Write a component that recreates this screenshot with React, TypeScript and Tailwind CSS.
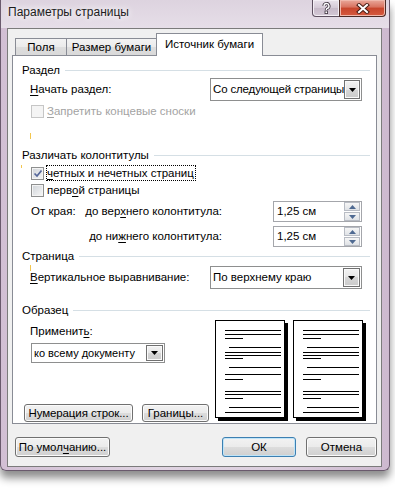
import React from "react";

const Tri = () => (
  <svg width="7" height="4" viewBox="0 0 7 4">
    <path d="M0 0h7L3.5 4z" fill="#000" />
  </svg>
);

const Combo = ({ text, className, textClass = "" }: { text: string; className: string; textClass?: string }) => (
  <div className={"flex items-stretch bg-white border border-[#8e8f8f] p-px " + className}>
    <div className={"flex-1 flex items-center pl-[1px] whitespace-nowrap " + textClass}>{text}</div>
    <div className="w-[17px] flex items-center justify-center border border-[#707070] bg-[linear-gradient(#f3f3f3,#e6e6e6_50%,#d6d6d6_50%,#cbcbcb)] shadow-[inset_0_0_0_1px_#fafafa]">
      <Tri />
    </div>
  </div>
);

const Check = ({ checked = false, disabled = false }: { checked?: boolean; disabled?: boolean }) => (
  <div
    className={
      "w-[13px] h-[13px] border flex items-center justify-center shrink-0 " +
      (disabled
        ? "border-[#c6c6c6] bg-[#f4f4f4]"
        : "border-[#8e8f8f] bg-[linear-gradient(135deg,#cfd3d8,#f7f7f7)] shadow-[inset_0_0_0_1px_#f4f4f4]")
    }
  >
    {checked && (
      <svg width="10" height="9" viewBox="0 0 10 9">
        <path d="M1.5 4.5L4 7L8.5 1.5" stroke="#55679a" strokeWidth="1.7" fill="none" />
      </svg>
    )}
  </div>
);

const SpinArrow = ({ up }: { up?: boolean }) => (
  <svg width="7" height="4" viewBox="0 0 7 4">
    <path d={up ? "M0 4h7L3.5 0z" : "M0 0h7L3.5 4z"} fill="#4f6a92" />
  </svg>
);

const Spin = ({ value }: { value: string }) => (
  <div className="w-[89px] h-[21px] border border-[#a4a6ab] bg-white flex items-center">
    <span className="flex-1 pl-[3px]">{value}</span>
    <div className="flex flex-col gap-px mr-px">
      <div className="w-[16px] h-[9px] flex items-center justify-center border border-[#b8bcc4] bg-[linear-gradient(#f6f6f6,#dfe2e6)]">
        <SpinArrow up />
      </div>
      <div className="w-[16px] h-[9px] flex items-center justify-center border border-[#b8bcc4] bg-[linear-gradient(#f6f6f6,#dfe2e6)]">
        <SpinArrow />
      </div>
    </div>
  </div>
);

const Btn = ({ children, className, primary }: { children: React.ReactNode; className: string; primary?: boolean }) => (
  <div
    className={
      "flex items-center justify-center rounded-[3px] border whitespace-nowrap bg-[linear-gradient(#f2f2f2,#ebebeb_50%,#dddddd_50%,#cfcfcf)] " +
      (primary
        ? "border-[#3c7fb1] shadow-[inset_0_0_0_1px_#bfe4f8]"
        : "border-[#707070] shadow-[inset_0_0_0_1px_#fbfbfb]") +
      " " +
      className
    }
  >
    {children}
  </div>
);

const Header = ({ title }: { title: string }) => (
  <div className="flex items-center h-[15px] pl-[9px] pr-[6px]">
    <span>{title}</span>
    <div className="flex-1 h-px bg-[#d5dfe5] ml-[5px]" />
  </div>
);

const U = ({ children }: { children: React.ReactNode }) => (
  <span className="underline underline-offset-[2px]">{children}</span>
);

// строки на миниатюре страницы: [y, x1, x2]
const pageLines: [number, number, number][] = [
  [9, 9, 65], [13, 9, 65], [17, 9, 27],
  [26, 13, 65], [31, 9, 65], [34, 9, 65], [37, 9, 27],
  [46, 13, 65], [53, 9, 65], [58, 9, 27],
  [70, 9, 65], [73, 9, 65], [77, 9, 27],
  [86, 13, 65], [91, 9, 65],
];

const PagePreview = () => (
  <div className="w-[70px] h-[98px] border border-black bg-white shadow-[3px_3px_0_#000]">
    <svg width="68" height="96" viewBox="0 0 68 96">
      {pageLines.map(([y, x1, x2], i) => (
        <rect key={i} x={x1} y={y} width={x2 - x1} height="1" fill="#000" />
      ))}
    </svg>
  </div>
);

export default function App() {
  return (
    <div className="w-[395px] h-[495px] bg-white overflow-hidden font-['Liberation_Sans',Arial,sans-serif] text-[11.5px] text-black leading-[15px]">
      <div className="w-[390px] h-[471px] flex flex-col border-x border-b border-[#6a5a6d] rounded-b-[6px] bg-[linear-gradient(90deg,#d2bfd4,#e0d4e2_40%,#ddd0df_70%,#cdb9cf)] shadow-[0_7px_9px_rgba(0,0,0,0.45)]">
        {/* заголовок окна */}
        <div className="h-[28px] flex items-start bg-[linear-gradient(#ddd3df,#e6dee8)]">
          <span className="pl-[7px] pt-[5px] text-[12px] text-[#1c1c1c] [text-shadow:0_0_6px_#fff,0_0_10px_#fff]">
            Параметры страницы
          </span>
          <div className="ml-auto mr-[3px] flex">
            <div className="w-[28px] h-[17px] flex items-center justify-center border border-[#5d5060] border-t-0 rounded-bl-[4px] bg-[linear-gradient(#e9e2eb,#d4c9d6_50%,#c6b9c8_50%,#d3c8d5)] shadow-[inset_0_0_0_1px_#f3eef4]">
              <svg width="9" height="12" viewBox="0 0 9 12">
                <path d="M2 4a2.5 2.5 0 1 1 3.2 2.4c-.7.3-.9.8-.9 1.6" stroke="#3e3440" strokeWidth="3" fill="none" />
                <path d="M2 4a2.5 2.5 0 1 1 3.2 2.4c-.7.3-.9.8-.9 1.6" stroke="#fff" strokeWidth="1.4" fill="none" />
                <rect x="3" y="9" width="2.6" height="2.6" fill="#fff" stroke="#3e3440" strokeWidth="0.8" />
              </svg>
            </div>
            <div className="w-[47px] h-[17px] -ml-px flex items-center justify-center border border-[#4b2a25] border-t-0 rounded-br-[4px] bg-[linear-gradient(#e9a89b,#d8715e_45%,#c7452c_50%,#d55a3f)] shadow-[inset_0_0_0_1px_#f0b8ac]">
              <svg width="14" height="11" viewBox="0 0 14 11">
                <path d="M3 2L11 9M11 2L3 9" stroke="#4a1d15" strokeWidth="4" strokeLinecap="square" />
                <path d="M3 2L11 9M11 2L3 9" stroke="#fff" strokeWidth="2" strokeLinecap="square" />
              </svg>
            </div>
          </div>
        </div>

        {/* клиентская область */}
        <div className="ml-[6px] w-[375px] h-[439px] border border-[#7b7b7b] bg-[#f0f0f0] flex flex-col px-[4px] pt-[4px]">
          <div className="flex items-end h-[23px] pl-[3px] relative z-10">
            <div className="w-[52px] h-[17px] mb-px flex items-center justify-center border border-b-0 border-[#898c95] bg-[linear-gradient(#f3f3f3,#ebebeb_50%,#dedede_50%,#d9d9d9)]">
              Поля
            </div>
            <div className="w-[91px] h-[17px] mb-px -ml-px flex items-center justify-center border border-b-0 border-[#898c95] bg-[linear-gradient(#f3f3f3,#ebebeb_50%,#dedede_50%,#d9d9d9)]">
              Размер бумаги
            </div>
            <div className="w-[107px] h-[23px] -ml-px flex items-center justify-center border border-b-0 border-[#898c95] bg-white pb-[2px]">
              Источник бумаги
            </div>
          </div>

          {/* панель вкладки */}
          <div className="-mt-px h-[369px] bg-white border border-[#898c95] flex flex-col pt-[7px] relative">
            <Header title="Раздел" />
            <div className="flex items-center h-[23px]">
              <span className="pl-[17px]">
                <U>Н</U>ачать раздел:
              </span>
              <Combo
                text="Со следующей страницы"
                className="ml-auto mr-[14px] w-[152px] h-[23px]"
                textClass="tracking-[-0.15px]"
              />
            </div>
            <div className="flex items-center h-[15px] mt-[3px] pl-[18px] gap-[3px] text-[#a3a3a3]">
              <Check disabled />
              <span>
                <U>З</U>апретить концевые сноски
              </span>
            </div>
            <div className="h-[6px] mt-[14px] pl-[17px]">
              <div className="w-px h-[6px] bg-[#f3c64e]" />
            </div>

            <div className="mt-[9px]">
              <Header title="Различать колонтитулы" />
            </div>
            <div className="flex items-center h-[16px] mt-[2px] pl-[18px] gap-[2px]">
              <Check checked />
              <span className="border border-dotted border-black h-[16px] flex items-center pr-px">
                <U>ч</U>етных и нечетных страниц
              </span>
            </div>
            <div className="flex items-center h-[16px] mt-px pl-[18px] gap-[3px]">
              <Check />
              <span>
                перв<U>о</U>й страницы
              </span>
            </div>
            <div className="flex items-center h-[21px] mt-[3px] pl-[18px]">
              <span className="w-[56px]">От края:</span>
              <span className="w-[135px] flex justify-end whitespace-nowrap">
                <span>
                  до вер<U>х</U>него колонтитула:
                </span>
              </span>
              <div className="ml-auto mr-[14px]">
                <Spin value="1,25 см" />
              </div>
            </div>
            <div className="flex items-center h-[21px] mt-[4px] pl-[18px]">
              <span className="w-[56px]" />
              <span className="w-[135px] flex justify-end whitespace-nowrap">
                <span>
                  до ни<U>ж</U>него колонтитула:
                </span>
              </span>
              <div className="ml-auto mr-[14px]">
                <Spin value="1,25 см" />
              </div>
            </div>

            <div className="mt-[2px]">
              <Header title="Страница" />
            </div>
            <div className="flex items-center h-[23px] mt-[2px]">
              <span className="pl-[17px]">
                <U>В</U>ертикальное выравнивание:
              </span>
              <Combo text="По верхнему краю" className="ml-auto mr-[14px] w-[152px] h-[23px]" />
            </div>

            <div className="mt-[14px]">
              <Header title="Образец" />
            </div>
            <div className="flex">
              <div className="w-[202px] pl-[11px] flex flex-col">
                <span className="ml-[6px] mt-[6px] h-[15px]">
                  Применит<U>ь</U>:
                </span>
                <Combo text="ко всему документу" className="ml-[7px] mt-[4px] w-[134px] h-[20px]" textClass="text-[11px]" />
                <div className="flex mt-[41px]">
                  <Btn className="w-[109px] h-[18px] tracking-[-0.1px]">Нумерация строк...</Btn>
                  <Btn className="w-[67px] h-[18px] ml-[9px]">Границы...</Btn>
                </div>
              </div>
              <div className="flex gap-[8px] pt-[2px]">
                <PagePreview />
                <PagePreview />
              </div>
            </div>

            {/* следы курсора */}
            <div className="absolute left-[8px] top-[109px] w-px h-[3px] bg-[#f3c64e]" />
            <div className="absolute left-[17px] top-[209px] w-px h-[6px] bg-[#f3c64e]" />
          </div>

          <div className="flex items-center mt-[13px] h-[20px]">
            <Btn className="ml-[3px] w-[95px] h-[20px]">
              По умол<U>ч</U>анию...
            </Btn>
            <Btn primary className="ml-auto w-[74px] h-[20px]">
              ОК
            </Btn>
            <Btn className="ml-[10px] w-[71px] h-[20px]">Отмена</Btn>
          </div>
        </div>
      </div>
    </div>
  );
}
